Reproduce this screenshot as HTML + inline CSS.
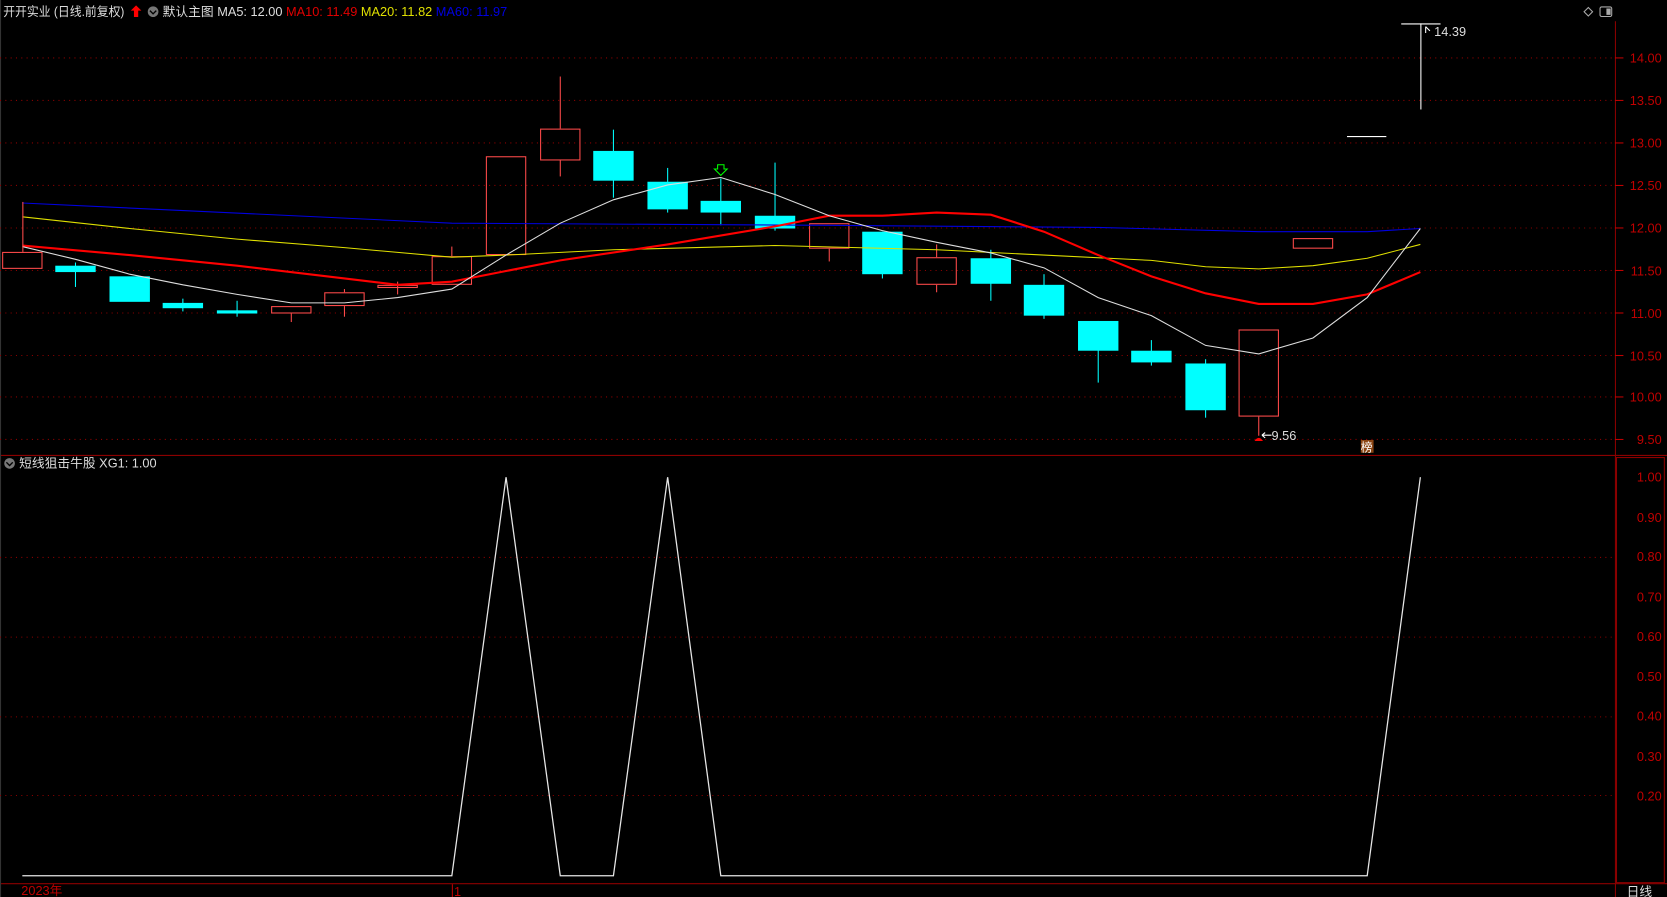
<!DOCTYPE html>
<html><head><meta charset="utf-8"><style>
html,body{margin:0;padding:0;background:#000;overflow:hidden}
svg{display:block}
text{font-family:"Liberation Sans","Noto Sans CJK SC",sans-serif}
</style></head><body>
<svg width="1667" height="897" viewBox="0 0 1568 844" preserveAspectRatio="none" xmlns="http://www.w3.org/2000/svg">
<rect width="1568" height="844" fill="#000"/>
<g stroke="#8b0000" stroke-width="1" fill="none">
<line x1="0" y1="428.5" x2="1568" y2="428.5"/>
<line x1="1519.5" y1="20" x2="1519.5" y2="844"/>
<line x1="0" y1="831.5" x2="1568" y2="831.5"/>
<rect x="1520.5" y="430.5" width="45" height="400"/>
<line x1="0.5" y1="0" x2="0.5" y2="844" stroke="#333"/>
</g>
<g stroke="#8b0000" stroke-dasharray="1,4" stroke-width="1">
<line x1="0" y1="54.5" x2="1519" y2="54.5"/><line x1="0" y1="94.5" x2="1519" y2="94.5"/>
<line x1="0" y1="134.5" x2="1519" y2="134.5"/><line x1="0" y1="174.5" x2="1519" y2="174.5"/>
<line x1="0" y1="214.5" x2="1519" y2="214.5"/><line x1="0" y1="254.5" x2="1519" y2="254.5"/>
<line x1="0" y1="294.5" x2="1519" y2="294.5"/><line x1="0" y1="334.5" x2="1519" y2="334.5"/>
<line x1="0" y1="373.5" x2="1519" y2="373.5"/><line x1="0" y1="413.5" x2="1519" y2="413.5"/>
<line x1="0" y1="524.5" x2="1519" y2="524.5"/><line x1="0" y1="599.5" x2="1519" y2="599.5"/>
<line x1="0" y1="674.5" x2="1519" y2="674.5"/><line x1="0" y1="748.5" x2="1519" y2="748.5"/>
</g>
<g fill="#c00000" font-size="12" text-anchor="end">
<text x="1563" y="59">14.00</text><text x="1563" y="99">13.50</text><text x="1563" y="139">13.00</text>
<text x="1563" y="179">12.50</text><text x="1563" y="219">12.00</text><text x="1563" y="259">11.50</text>
<text x="1563" y="299">11.00</text><text x="1563" y="339">10.50</text><text x="1563" y="378">10.00</text>
<text x="1563" y="418">9.50</text>
<text x="1563" y="453">1.00</text><text x="1563" y="491">0.90</text><text x="1563" y="528">0.80</text>
<text x="1563" y="566">0.70</text><text x="1563" y="603">0.60</text><text x="1563" y="641">0.50</text>
<text x="1563" y="678">0.40</text><text x="1563" y="716">0.30</text><text x="1563" y="753">0.20</text>
</g>
<g stroke="#c00000">
<line x1="1519" y1="54.5" x2="1527" y2="54.5"/><line x1="1519" y1="94.5" x2="1527" y2="94.5"/><line x1="1519" y1="134.5" x2="1527" y2="134.5"/><line x1="1519" y1="174.5" x2="1527" y2="174.5"/><line x1="1519" y1="214.5" x2="1527" y2="214.5"/><line x1="1519" y1="254.5" x2="1527" y2="254.5"/><line x1="1519" y1="294.5" x2="1527" y2="294.5"/><line x1="1519" y1="334.5" x2="1527" y2="334.5"/><line x1="1519" y1="373.5" x2="1527" y2="373.5"/><line x1="1519" y1="413.5" x2="1527" y2="413.5"/>
</g>
<text x="20" y="842" fill="#c00000" font-size="12">2023年</text>
<line x1="425.5" y1="832" x2="425.5" y2="844" stroke="#c00000"/>
<text x="427" y="843" fill="#c00000" font-size="12">1</text>
<text x="1530" y="843" fill="#ddd" font-size="12">日线</text>
<text x="3" y="15" fill="#ddd" font-size="12" textLength="114" lengthAdjust="spacingAndGlyphs">开开实业 (日线.前复权)</text>
<path d="M128 5 L133 10 L130 10 L130 16 L126 16 L126 10 L123 10Z" fill="#f00"/>
<circle cx="144" cy="11" r="5" fill="#777"/><path d="M141 10 L144 13 L147 10" stroke="#000" stroke-width="1.3" fill="none"/>
<text x="153" y="15" font-size="12"><tspan fill="#ddd">默认主图  MA5: 12.00 </tspan><tspan fill="#e00000"> MA10: 11.49 </tspan><tspan fill="#e0e000"> MA20: 11.82 </tspan><tspan fill="#0000e0"> MA60: 11.97</tspan></text>
<path d="M1490 11 L1494 7 L1498 11 L1494 15Z" stroke="#aaa" fill="none"/>
<rect x="1505" y="6.5" width="11" height="9" rx="1.5" stroke="#aaa" fill="none"/><rect x="1511" y="8" width="4" height="6" fill="#aaa"/>
<circle cx="9" cy="436" r="5" fill="#777"/><path d="M6 435 L9 438 L12 435" stroke="#000" stroke-width="1.3" fill="none"/>
<text x="18" y="440" fill="#ddd" font-size="12">短线狙击牛股  XG1: 1.00</text>
<g fill="#00ffff" stroke="#00ffff">
<line x1="71" y1="247" x2="71" y2="270"/><rect x="52" y="250" width="38" height="6" stroke="none"/>
<rect x="103" y="260" width="38" height="24" stroke="none"/>
<line x1="172" y1="281" x2="172" y2="293"/><rect x="153" y="285" width="38" height="5" stroke="none"/>
<line x1="223" y1="283" x2="223" y2="298"/><rect x="204" y="292" width="38" height="3" stroke="none"/>
<line x1="577" y1="122" x2="577" y2="186"/><rect x="558" y="142" width="38" height="28" stroke="none"/>
<line x1="628" y1="158" x2="628" y2="200"/><rect x="609" y="171" width="38" height="26" stroke="none"/>
<line x1="678" y1="168" x2="678" y2="212"/><rect x="659" y="189" width="38" height="11" stroke="none"/>
<line x1="729" y1="153" x2="729" y2="217"/><rect x="710" y="203" width="38" height="12" stroke="none"/>
<line x1="830" y1="218" x2="830" y2="262"/><rect x="811" y="218" width="38" height="40" stroke="none"/>
<line x1="932" y1="235" x2="932" y2="283"/><rect x="913" y="243" width="38" height="24" stroke="none"/>
<line x1="982" y1="258" x2="982" y2="300"/><rect x="963" y="268" width="38" height="29" stroke="none"/>
<line x1="1033" y1="302" x2="1033" y2="360"/><rect x="1014" y="302" width="38" height="28" stroke="none"/>
<line x1="1083" y1="320" x2="1083" y2="344"/><rect x="1064" y="330" width="38" height="11" stroke="none"/>
<line x1="1134" y1="338" x2="1134" y2="393"/><rect x="1115" y="342" width="38" height="44" stroke="none"/>
</g>
<g fill="none" stroke="#ff4a4a">
<rect x="2.5" y="237.5" width="37" height="15"/>
<line x1="274" y1="295" x2="274" y2="303"/><rect x="255.5" y="288.5" width="37" height="6"/>
<line x1="324" y1="272" x2="324" y2="275"/><line x1="324" y1="288" x2="324" y2="298"/><rect x="305.5" y="275.5" width="37" height="12"/>
<line x1="374" y1="265" x2="374" y2="277"/><rect x="355.5" y="268.5" width="37" height="2"/>
<line x1="425" y1="232" x2="425" y2="241"/><rect x="406.5" y="241.5" width="37" height="26"/>
<rect x="457.5" y="147.5" width="37" height="92"/>
<line x1="527" y1="72" x2="527" y2="121"/><line x1="527" y1="151" x2="527" y2="166"/><rect x="508.5" y="121.5" width="37" height="29"/>
<line x1="780" y1="234" x2="780" y2="246"/><rect x="761.5" y="210.5" width="37" height="23"/>
<line x1="881" y1="230" x2="881" y2="242"/><line x1="881" y1="268" x2="881" y2="275"/><rect x="862.5" y="242.5" width="37" height="25"/>
<line x1="1184" y1="392" x2="1184" y2="410"/><rect x="1165.5" y="310.5" width="37" height="81"/>
<rect x="1216.5" y="224.5" width="37" height="9"/>
</g>
<g stroke="#fff" fill="none">
<line x1="1267" y1="128.5" x2="1304" y2="128.5"/>
<line x1="1336.5" y1="22" x2="1336.5" y2="103"/>
<line x1="1318" y1="22.5" x2="1355" y2="22.5"/>
<path d="M1341 25 L1341 31 M1341 25 L1345 29"/>
<path d="M1196 409.5 L1187 409.5 M1187 409.5 L1190 407 M1187 409.5 L1190 412"/>
</g>
<text x="1349" y="34" fill="#ddd" font-size="12">14.39</text>
<text x="1196" y="414" fill="#ddd" font-size="12">9.56</text>
<path d="M1180 415 Q1184 409 1188 415Z" fill="#f00"/>
<rect x="1280" y="414" width="12" height="12" fill="#8b4513"/>
<text x="1280" y="425" fill="#fff" font-size="11">榜</text>
<path d="M675 155 L681 155 L681 159 L684 159 L678 165 L672 159 L675 159Z" stroke="#0f0" fill="none"/>
<polyline fill="none" stroke="#0000e0" stroke-width="1" points="21,191 425,210 780,212 1033,214 1184,218 1286,218 1336,215"/>
<polyline fill="none" stroke="#e0e000" stroke-width="1" points="21,204 122,215 223,225 324,233 425,242 476,240 577,235 729,231 881,235 982,240 1083,245 1134,251 1184,253 1235,250 1286,243 1336,230"/>
<polyline fill="none" stroke="#ff0000" stroke-width="2" points="21,231 122,240 223,250 324,262 374,268 425,265 476,255 527,245 628,230 729,213 780,203 830,203 881,200 932,202 982,218 1033,240 1083,260 1134,276 1184,286 1235,286 1286,277 1336,256"/>
<polyline fill="none" stroke="#ddd" stroke-width="1" points="21,232 71,244 122,258 172,268 223,277 274,285 324,285 374,280 425,272 476,240 527,210 577,188 628,174 678,167 729,183 780,203 830,217 881,228 932,238 982,252 1033,280 1083,297 1134,325 1184,333 1235,318 1286,280 1336,215"/>
<line x1="21.5" y1="190" x2="21.5" y2="237" stroke="#ff4a4a"/>
<polyline fill="none" stroke="#e6e6e6" stroke-width="1.2" points="21,824 425,824 476,449 527,824 577,824 628,449 678,824 1286,824 1336,449"/>
</svg>
</body></html>
